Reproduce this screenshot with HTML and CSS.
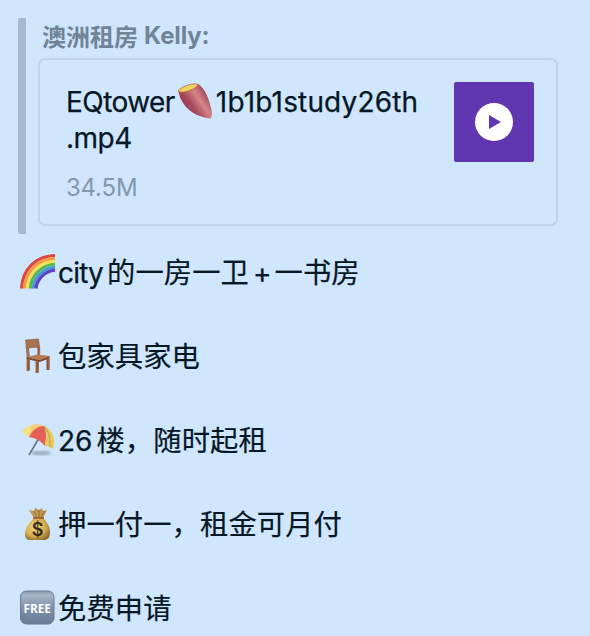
FILE: index.html
```html
<!DOCTYPE html>
<html lang="zh-CN">
<head>
<meta charset="utf-8">
<title>澳洲租房 Kelly</title>
<link rel="stylesheet" href="styles.css">
</head>
<body>
<main class="message">
  <section class="quote">
    <div class="author"><span class="author-cn">澳洲租房</span><span class="author-en">Kelly:</span></div>
    <div class="file">
      <div class="info">
        <div class="name"><span class="name-a">EQtower</span><svg class="potato" viewBox="0 0 38 38"><defs><linearGradient id="skin" x1="0" y1="1" x2="1" y2="0.3"><stop offset="0" stop-color="#713048"/><stop offset=".45" stop-color="#a84a5b"/><stop offset=".68" stop-color="#d58488"/><stop offset="1" stop-color="#8f3349"/></linearGradient></defs><path d="M2.500 8.500C3 18 11 28 20 32.500Q28 36 34.500 36.500Q37 34 35 26C33 17 29 6 22 2Z" fill="url(#skin)"/><path d="M2.300 9.500C2 6 15 .8 21 2.200C25 4.500 8 12.500 2.300 9.500Z" fill="#efd45c" stroke="#ac5148" stroke-width=".7"/></svg><span class="name-b">1b1b1study26th</span><br><span class="name-c">.mp4</span></div>
        <div class="size">34.5M</div>
      </div>
      <div class="thumb"><svg viewBox="0 0 80 80"><circle cx="40" cy="40" r="19" fill="#fff"/><path d="M35 33v14l12-7z" fill="#6036b1"/></svg></div>
    </div>
  </section>

  <div class="line">
    <svg class="emoji" viewBox="0 0 38 38"><g fill="none" stroke-width="3.100"><path d="M2.500 34.500C3.500 15 17 2 36 1.500" stroke="#d94b40"/><path d="M5.500 34.500C6.500 17 19 5 36 4.500" stroke="#f39a43"/><path d="M8.400 34.500C9.500 19 21 8 36 7.400" stroke="#f5e05a"/><path d="M11.300 34.500C12 21 23 11 36 10.300" stroke="#55b857"/><path d="M14.200 34.500C15 23 25 14 36 13.200" stroke="#4597dc"/><path d="M17 34.500C18 25 26 17 36 16.100" stroke="#6040c3"/></g></svg>
    <span class="latin city">city</span><span class="cn gap">的一房一卫</span><span class="latin plus">+</span><span class="cn">一书房</span>
  </div>

  <div class="line">
    <svg class="emoji" viewBox="0 0 38 38"><path d="M6.500 2l13-1 1 8-13 1z" fill="#a8714f" stroke="#885239" stroke-width=".6"/><path d="M7.700 8l1.300 12M20 8v9" stroke="#a66d49" stroke-width="2.300" fill="none"/><path d="M9.500 10l.8 8M19 9v8" stroke="#784830" stroke-width=".8"/><path d="M7.500 19l11-2.500 12 1.500-10 4z" fill="#b77b53"/><path d="M7.500 19l13 3 10-4v2.500L20.500 24l-13-3z" fill="#80492f"/><path d="M9 21v12M18 23v12M29.300 20v12" stroke="#98603f" stroke-width="2.800"/><path d="M10.200 22v10M19.200 24v10M28 21v11" stroke="#70422f" stroke-width=".8"/></svg>
    <span class="cn">包家具家电</span>
  </div>

  <div class="line">
    <svg class="emoji" viewBox="0 0 38 38"><defs><filter id="soft"><feGaussianBlur stdDeviation=".8"/></filter></defs><g transform="translate(0 -1)"><ellipse cx="22" cy="32" rx="10" ry="2.300" fill="#9bb1c3" filter="url(#soft)"/><path d="M20 17L10 34" stroke="#65717b" stroke-width="1.500"/><path d="M3 10C9 3 17 2 25 5L21 6C14 10 13 14 10.500 16C8 14 5 13 3 10Z" fill="#f4df83"/><path d="M10 16C13 9 18 5 25 5C28 11 27 18 26 25C21 19 16 17 10 16Z" fill="#e76055"/><path d="M25 5C34 8 37 20 34 28C32 28 28 24 26 25C27 17 29 12 25 5Z" fill="#e6ca5f"/><path d="M12 5Q18 1 25 5Q16 6 11 16" fill="#efa056" opacity=".25"/><path d="M25 5Q32 12 31 26" stroke="#b49a4a" stroke-width=".8" fill="none"/></g></svg>
    <span class="latin two">26</span><span class="cn gap">楼，随时起租</span>
  </div>

  <div class="line">
    <svg class="emoji" viewBox="0 0 38 38"><defs><radialGradient id="gold" cx=".4" cy=".4" r=".65"><stop stop-color="#efd37d"/><stop offset=".65" stop-color="#d5ad50"/><stop offset="1" stop-color="#93702e"/></radialGradient></defs><path d="M15 12L10 4L15 5L16 2L20 4L23 2L24 5L28 4L24 12Z" fill="#c09751"/><path d="M15 5l3 7M20 4v8M25 5l-3 7" stroke="#80602e" stroke-width=".7"/><path d="M15 12C11 16 6 21 6 28Q6 34 11 34H26Q31 33 31 27C31 20 28 16 24 12Z" fill="url(#gold)"/><path d="M14 12H25" stroke="#a55b31" stroke-width="1.700"/><text class="dollar" x="18.500" y="30" text-anchor="middle">$</text></svg>
    <span class="cn">押一付一，租金可月付</span>
  </div>

  <div class="line">
    <svg class="emoji" viewBox="0 0 38 38"><defs><linearGradient id="free" x2="0" y2="1"><stop stop-color="#8395ac"/><stop offset=".12" stop-color="#a6b5c7"/><stop offset=".5" stop-color="#8193aa"/><stop offset="1" stop-color="#687b95"/></linearGradient></defs><rect x="1.500" y="1" width="33.500" height="33" rx="6" fill="url(#free)" stroke="#697b93"/><text class="free" x="18.200" y="22.500" text-anchor="middle" textLength="27.500" lengthAdjust="spacingAndGlyphs">FREE</text></svg>
    <span class="cn">免费申请</span>
  </div>
</main>
</body>
</html>
```

FILE: styles.css
```css
* { box-sizing: border-box; }
body {
  margin: 0;
  background: #cfe6fd;
  color: #061726;
  font-family: Inter, "Noto Sans CJK SC", sans-serif;
  overflow: hidden;
}
.message { height: 636px; padding: 18px 32px 0 18px; overflow: hidden; }
.quote {
  height: 216px;
  padding-left: 12px;
  border-left: 8px solid #a5bad0;
  border-radius: 2px;
  margin-bottom: -3px;
}
.author {
  display: flex;
  align-items: center;
  height: 40px;
  padding: 0 0 6px 4px;
  color: #718497;
  font-size: 24px;
  font-weight: 700;
  white-space: nowrap;
}
.author-en { margin-left: 6px; letter-spacing: -0.15px; }
.file {
  display: flex;
  justify-content: space-between;
  width: 520px;
  height: 168px;
  padding: 22px;
  border: 2px solid #bfd5ec;
  border-radius: 7px;
}
.info { padding: 2px 0 0 4px; }
.name { font-size: 28px; line-height: 36px; white-space: nowrap; -webkit-text-stroke: 0.25px #061726; }
.name-a { letter-spacing: -0.55px; }
.name-b { letter-spacing: 0.15px; }
.name-c { letter-spacing: -0.5px; }
.potato { width: 38px; height: 38px; margin: -9px 2px -4px 1px; vertical-align: -4px; }
.size { margin-top: 14px; color: #8297ac; font-size: 24px; line-height: 36px; letter-spacing: -0.2px; }
.thumb { width: 80px; height: 80px; border-radius: 2px; background: #6036b1; }
.thumb svg { display: block; }
.line { display: flex; align-items: center; height: 84px; font-size: 28px; line-height: 40px; white-space: nowrap; }
.latin { -webkit-text-stroke: 0.25px #061726; }
.emoji { flex: none; width: 38px; height: 38px; margin: 0 1px; }
.cn { font-size: 28.3px; letter-spacing: 0.1px; -webkit-text-stroke: 0.2px #061726; }
.city { letter-spacing: -0.8px; }
.gap { margin-left: 4px; }
.plus { margin: 0 3px 0 4px; }
.dollar { font: 600 18px Inter, sans-serif; fill: #352b1c; }
.free { font: 700 12.5px "Open Sans", sans-serif; fill: #fff; }
```
